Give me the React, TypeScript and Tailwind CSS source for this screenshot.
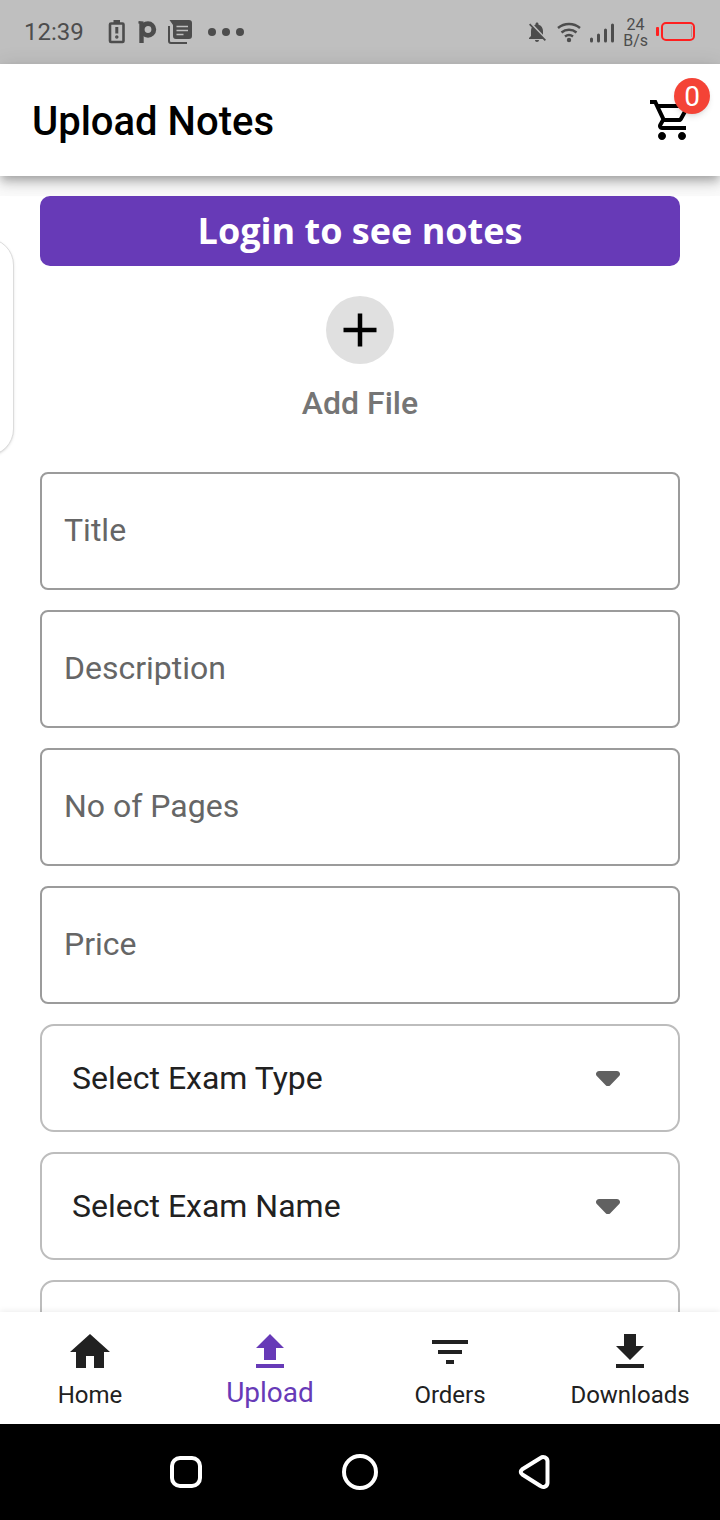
import type { ReactNode } from 'react'

type IconProps = { path: string; className?: string }

const CART =
  'M15.55 13c.75 0 1.41-.41 1.75-1.03l3.58-6.49A.996.996 0 0020.01 4H5.21l-.94-2H1v2h2l3.6 7.59-1.35 2.44C4.52 15.37 5.48 17 7 17h12v-2H7l1.1-2h7.45zM6.16 6h12.15l-2.76 5H8.53L6.16 6zM7 18c-1.1 0-1.99.9-1.99 2S5.9 22 7 22s2-.9 2-2-.9-2-2-2zm10 0c-1.1 0-1.99.9-1.99 2s.89 2 1.99 2 2-.9 2-2-.9-2-2-2z'
const BELL_OFF =
  'M20 18.69L7.84 6.14 5.27 3.49 4 4.76l2.8 2.8v.01c-.52.99-.8 2.16-.8 3.42v5l-2 2v1h13.73l2 2L21 19.72l-1-1.03zM12 22c1.11 0 2-.89 2-2h-4c0 1.11.89 2 2 2zm6-7.32V11c0-3.08-1.64-5.64-4.5-6.32V4c0-.83-.67-1.5-1.5-1.5s-1.5.67-1.5 1.5v.68c-.15.03-.29.08-.42.12-.1.03-.2.07-.3.11h-.01c-.01 0-.01 0-.02.01-.23.09-.46.2-.68.31 0 0-.01 0-.01.01L18 14.68z'

const tabs = [
  { label: 'Home', path: 'M10 20v-6h4v6h5v-8h3L12 3 2 12h3v8z' },
  { label: 'Upload', path: 'M5 20h14v-2H5v2zm0-10h4v6h6v-6h4l-7-7-7 7z', active: true },
  { label: 'Orders', path: 'M10 18h4v-2h-4v2zM3 6v2h18V6H3zm3 7h12v-2H6v2z' },
  { label: 'Downloads', path: 'M19 9h-4V3H9v6H5l7 7 7-7zM5 18v2h14v-2H5z' },
]

const fields = [
  { id: 'title', label: 'Title' },
  { id: 'description', label: 'Description' },
  { id: 'pages', label: 'No of Pages' },
  { id: 'price', label: 'Price' },
]

function Icon({ path, className }: IconProps) {
  return (
    <svg viewBox="0 0 24 24" fill="currentColor" aria-hidden="true" className={className}>
      <path d={path} />
    </svg>
  )
}

function StatusBar() {
  return (
    <div className="flex h-16 shrink-0 items-center justify-between bg-[#bfbfbf] px-6 text-[#4d4d4d]">
      <div className="flex items-center gap-2">
        <span className="mr-4 text-2xl">12:39</span>
        {/* battery alert */}
        <svg width="18" height="24" viewBox="0 0 18 24" fill="none" stroke="currentColor">
          <rect x="2" y="3.5" width="13.5" height="18.5" rx="1" strokeWidth="2.6" />
          <path d="M5.5 1.6h6.5" strokeWidth="3.2" />
          <path d="M8.8 7v6.5" strokeWidth="3" />
          <circle cx="8.8" cy="17" r="1" strokeWidth="1.5" />
        </svg>
        <svg width="26" height="24" viewBox="0 0 26 24" fill="none" stroke="currentColor">
          <circle cx="14" cy="9.5" r="5.8" strokeWidth="4.8" />
          <path d="M7.5 2.5V23" strokeWidth="4.4" />
          <path d="M4.5 2.2l5 .6" strokeWidth="2.4" />
        </svg>
        <svg width="24" height="24" viewBox="0 0 24 24">
          <path d="M1 6v15a2 2 0 0 0 2 2h16" fill="none" stroke="currentColor" strokeWidth="2" />
          <path d="M1.5 0H21a3 3 0 0 1 3 3v13a3 3 0 0 1-3 3H8a3 3 0 0 1-3-3V5z" fill="currentColor" />
          <path d="M8.5 6.5h11.5M8.5 10.5h11.5M8.5 14.500h7" stroke="#bfbfbf" strokeWidth="1.6" />
        </svg>
        <svg width="40" height="24" viewBox="0 0 40 24" fill="currentColor" className="ml-2">
          <circle cx="4" cy="12" r="4" />
          <circle cx="18" cy="12" r="4" />
          <circle cx="32" cy="12" r="4" />
        </svg>
      </div>
      <div className="flex items-center gap-2">
        <Icon path={BELL_OFF} className="size-6" />
        <svg width="24" height="24" viewBox="0 0 24 24" fill="none" stroke="currentColor" strokeWidth="2.4">
          <path d="M1 8a17 17 0 0 1 22 0" />
          <path d="M4.5 12.5a11.500 11.500 0 0 1 15 0" />
          <path d="M8 16.5a6.500 6.500 0 0 1 8 0" />
          <circle cx="12" cy="20" r="2.2" fill="currentColor" stroke="none" />
        </svg>
        <svg width="26" height="24" viewBox="0 0 26 24" stroke="currentColor" strokeWidth="3" strokeLinecap="round">
          <path d="M2.5 19v2M9.5 15v6M16.500 10v11M23.500 5v16" />
        </svg>
        <span className="pt-[2px] text-center text-base leading-4">
          24
          <br />
          B/s
        </span>
        <svg width="40" height="20" viewBox="0 0 40 20" fill="none">
          <rect x="0" y="5" width="3" height="9" rx="1" fill="#ff1f1f" />
          <rect x="6" y="1" width="32" height="17" rx="4" stroke="#ff1f1f" strokeWidth="2" />
          <path d="M35.5 4v11" stroke="#a66" strokeWidth="0.5" />
        </svg>
      </div>
    </div>
  )
}

function SelectField({ name, children }: { name: string; children?: ReactNode }) {
  return (
    <div className="relative shrink-0">
      <select
        name={name}
        aria-label={name}
        className="block h-[108px] w-full appearance-none rounded-[14px] border-2 border-[#bdbdbd] bg-white px-[30px] text-[32px] text-[#212121]"
      >
        {children}
      </select>
      <svg
        viewBox="0 0 24 16"
        className="pointer-events-none absolute top-[46px] right-[60px] h-4 w-6 text-[#616161]"
        fill="currentColor"
        aria-hidden="true"
      >
        <path d="M3 1h18a3 3 0 0 1 2.200 5L14.300 15.200a3.300 3.300 0 0 1-4.600 0L0.800 6A3 3 0 0 1 3 1z" />
      </svg>
    </div>
  )
}

function SystemBar() {
  return (
    <div className="flex h-24 shrink-0 items-center justify-center gap-[134px] bg-black text-white">
      <button type="button" aria-label="Recent apps">
        <svg width="40" height="40" viewBox="0 0 40 40" fill="none" stroke="currentColor" strokeWidth="4">
          <rect x="6" y="6" width="28" height="28" rx="8" />
        </svg>
      </button>
      <button type="button" aria-label="Home screen">
        <svg width="40" height="40" viewBox="0 0 40 40" fill="none" stroke="currentColor" strokeWidth="4">
          <circle cx="20" cy="20" r="16" />
        </svg>
      </button>
      <button type="button" aria-label="Back">
        <svg width="40" height="40" viewBox="0 0 40 40" fill="none" stroke="currentColor" strokeWidth="4" strokeLinejoin="round">
          <path d="M8.3 17.3 26.5 6A4.3 4.3 0 0 1 33.5 9V31A4.3 4.3 0 0 1 26.5 34L8.3 22.5Q5.3 20 8.3 17.3z" />
        </svg>
      </button>
    </div>
  )
}

export default function App() {
  return (
    <div className="flex h-screen flex-col bg-white font-[Roboto,sans-serif]">
      <StatusBar />
      <header className="relative z-10 flex h-28 shrink-0 items-center justify-between bg-white pr-6 pl-8 shadow-[0_4px_8px_-2px_rgba(0,0,0,0.2),0_8px_10px_rgba(0,0,0,0.14),0_2px_20px_rgba(0,0,0,0.12)]">
        <h1 className="pt-1 text-[40px] font-medium text-black">Upload Notes</h1>
        <button type="button" aria-label="Cart" className="relative">
          <Icon path={CART} className="size-12" />
          <span className="absolute -top-[18px] -right-[14px] flex size-9 items-center justify-center rounded-full bg-[#f44336] pt-px text-[28px] text-white shadow-md">
            0
          </span>
        </button>
      </header>

      <main className="relative min-h-0 flex-1 overflow-hidden border-t-[20px] border-[#fafafa] bg-white">
        <div className="absolute top-[42px] -left-10 h-[218px] w-[54px] rounded-[40px] border border-[#dcdcdc] bg-white shadow" />
        <form className="flex flex-col gap-5 px-10">
          <button type="button" className="h-[70px] shrink-0 rounded-[10px] bg-[#673ab7] font-['Open_Sans',sans-serif] text-4xl font-bold text-white">
            Login to see notes
          </button>
          <div className="mt-[10px] mb-[26px] flex shrink-0 flex-col items-center gap-4">
            <button type="button" aria-label="Add File" className="flex size-[68px] items-center justify-center rounded-full bg-[#e0e0e0]">
              <svg width="34" height="34" viewBox="0 0 34 34" stroke="black" strokeWidth="4.5">
                <path d="M17 .5v33M.5 17h33" />
              </svg>
            </button>
            <span className="text-[32px] leading-[46px] font-medium text-[#757575]">Add File</span>
          </div>
          {fields.map((field) => (
            <div key={field.id} className="relative shrink-0">
              <input
                id={field.id}
                type="text"
                placeholder=" "
                className="peer block h-[118px] w-full rounded-lg border-2 border-[#9b9b9b] bg-white px-[22px] text-[32px] text-[#212121]"
              />
              <label
                htmlFor={field.id}
                className="pointer-events-none absolute inset-y-0 left-6 flex items-center pb-[2px] text-[32px] text-[#666666] peer-[:not(:placeholder-shown)]:hidden"
              >
                {field.label}
              </label>
            </div>
          ))}
          <SelectField name="Exam type">
            <option>Select Exam Type</option>
          </SelectField>
          <SelectField name="Exam name">
            <option>Select Exam Name</option>
          </SelectField>
          <SelectField name="Subject" />
        </form>
      </main>

      <nav className="relative z-10 grid h-28 shrink-0 grid-cols-4 bg-white shadow-[0_-1px_6px_rgba(0,0,0,0.08)]">
        {tabs.map((tab) => (
          <a
            key={tab.label}
            href={`#${tab.label.toLowerCase()}`}
            className={
              tab.active
                ? 'flex flex-col items-center pt-4 text-[28px] leading-[34px] text-[#673ab7]'
                : 'flex flex-col items-center gap-[2px] pt-4 text-2xl leading-[34px] text-[#212121]'
            }
          >
            <Icon path={tab.path} className="size-12" />
            {tab.label}
          </a>
        ))}
      </nav>
      <SystemBar />
    </div>
  )
}
